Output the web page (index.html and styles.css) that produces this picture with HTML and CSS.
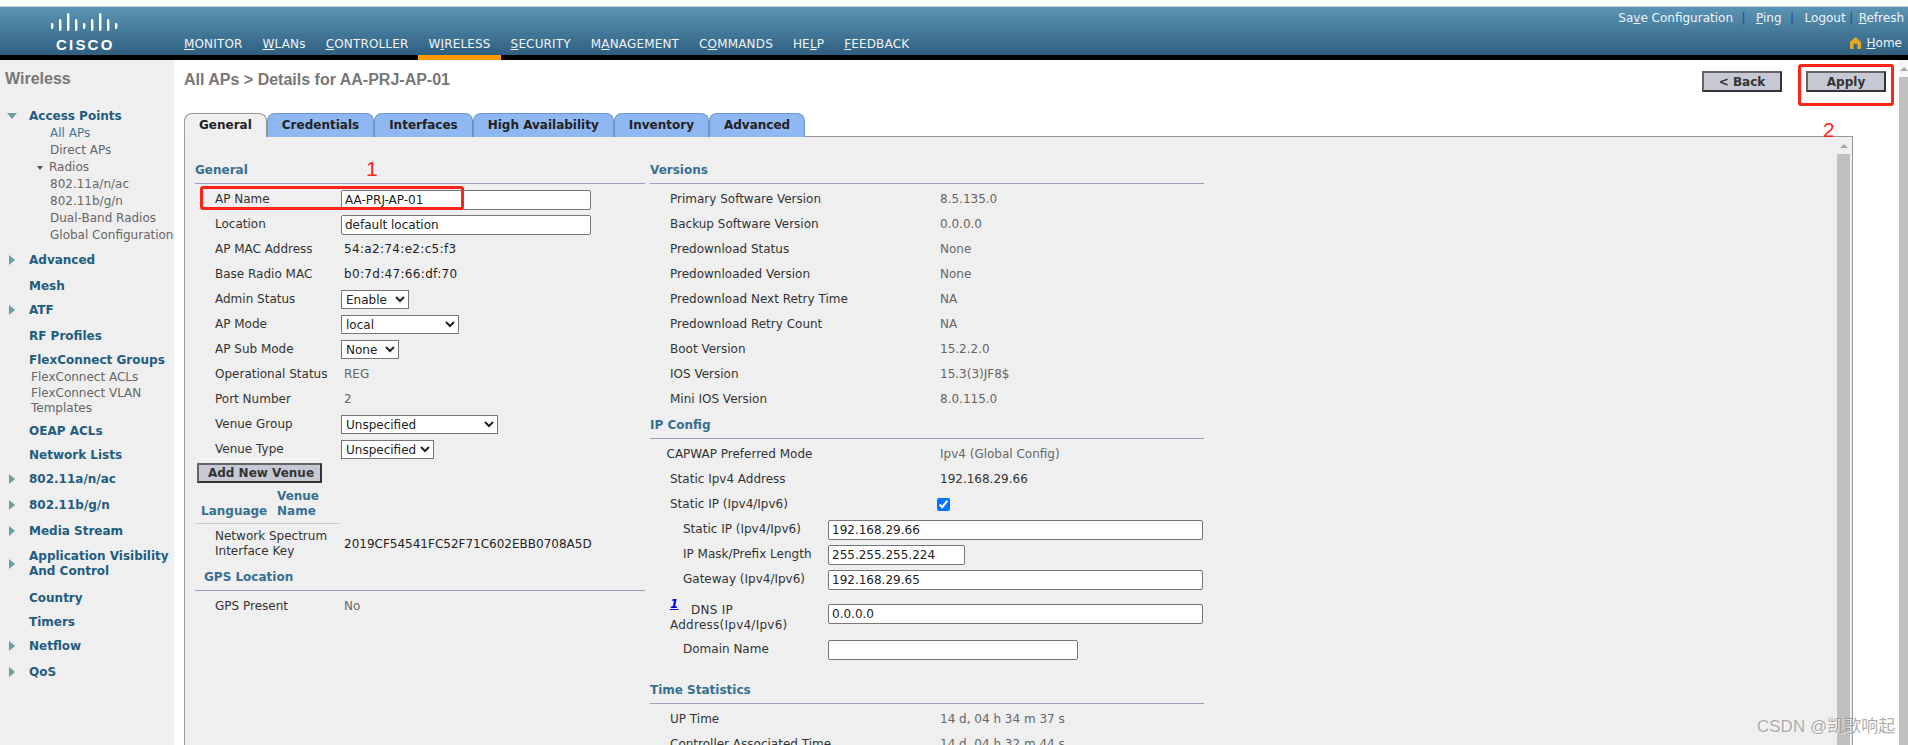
FILE: index.html
```html
<!DOCTYPE html>
<html lang="en">
<head>
  <meta charset="UTF-8" />
  <title>All APs > Details</title>
  <link rel="stylesheet" href="styles.css">
</head>
<body>
  <div class="topbar">
    <div class="logo">
      <svg class="bars" width="70" height="19" viewBox="0 0 70 19">
        <rect x="0" y="10" width="2.4" height="6" rx="1.2"/>
        <rect x="8" y="6" width="2.4" height="12" rx="1.2"/>
        <rect x="16" y="0" width="2.4" height="18" rx="1.2"/>
        <rect x="24" y="6" width="2.4" height="12" rx="1.2"/>
        <rect x="32" y="10" width="2.4" height="6" rx="1.2"/>
        <rect x="40" y="6" width="2.4" height="12" rx="1.2"/>
        <rect x="48" y="0" width="2.4" height="18" rx="1.2"/>
        <rect x="56" y="6" width="2.4" height="12" rx="1.2"/>
        <rect x="64" y="10" width="2.4" height="6" rx="1.2"/>
      </svg>
      <div class="logo-text">CISCO</div>
    </div>
    <nav class="mainnav">
      <a href="#"><u>M</u>ONITOR</a>
      <a href="#"><u>W</u>LANs</a>
      <a href="#"><u>C</u>ONTROLLER</a>
      <a href="#" class="active">W<u>I</u>RELESS</a>
      <a href="#"><u>S</u>ECURITY</a>
      <a href="#">M<u>A</u>NAGEMENT</a>
      <a href="#">C<u>O</u>MMANDS</a>
      <a href="#">HE<u>L</u>P</a>
      <a href="#"><u>F</u>EEDBACK</a>
    </nav>
    <div class="toplinks">
      <div class="toplinks-row">
        <a href="#" class="save">Sa<u>v</u>e Configuration</a><i class="sep sep-a">|</i>
        <a href="#"><u>P</u>ing</a><i class="sep sep-a">|</i>
        <a href="#">Lo<u>g</u>out</a><i class="sep sep-b">|</i>
        <a href="#"><u>R</u>efresh</a>
      </div>
      <div class="home-row">
        <svg width="11" height="12" viewBox="0 0 11 12"><path d="M5.5 0 L11 5 V12 H7.5 V7.5 Q5.5 5.5 3.5 7.5 V12 H0 V5 Z" fill="#e8a71c"/></svg>
        <a href="#"><u>H</u>ome</a>
      </div>
    </div>
  </div>

  <div class="page">
    <aside class="sidebar">
      <div class="side-title">Wireless</div>
      <a class="side-item open" href="#"><span class="arrow-down"></span>Access Points</a>
      <div class="sublist">
        <a href="#" class="current">All APs</a>
        <a href="#">Direct APs</a>
        <a href="#" class="radios"><span class="arrow-small"></span>Radios</a>
        <a href="#">802.11a/n/ac</a>
        <a href="#">802.11b/g/n</a>
        <a href="#">Dual-Band Radios</a>
        <a href="#">Global Configuration</a>
      </div>
      <a class="side-item has-arrow" href="#"><span class="arrow-right"></span>Advanced</a>
      <a class="side-item" href="#">Mesh</a>
      <a class="side-item has-arrow" href="#"><span class="arrow-right"></span>ATF</a>
      <a class="side-item" href="#">RF Profiles</a>
      <a class="side-item" href="#">FlexConnect Groups</a>
      <div class="sublist flex-list">
        <a href="#">FlexConnect ACLs</a>
        <a href="#">FlexConnect VLAN</a>
        <a href="#">Templates</a>
      </div>
      <a class="side-item" href="#">OEAP ACLs</a>
      <a class="side-item" href="#">Network Lists</a>
      <a class="side-item has-arrow" href="#"><span class="arrow-right"></span>802.11a/n/ac</a>
      <a class="side-item has-arrow" href="#"><span class="arrow-right"></span>802.11b/g/n</a>
      <a class="side-item has-arrow" href="#"><span class="arrow-right"></span>Media Stream</a>
      <a class="side-item has-arrow two-line" href="#"><span class="arrow-right"></span><span>Application Visibility<br>And Control</span></a>
      <a class="side-item" href="#">Country</a>
      <a class="side-item" href="#">Timers</a>
      <a class="side-item has-arrow" href="#"><span class="arrow-right"></span>Netflow</a>
      <a class="side-item has-arrow" href="#"><span class="arrow-right"></span>QoS</a>
    </aside>

    <main class="content">
      <div class="content-head">
        <h1>All APs &gt; Details for AA-PRJ-AP-01</h1>
        <div class="actions">
          <button class="btn">&lt; Back</button>
          <button class="btn">Apply</button>
        </div>
      </div>

      <div class="tabs">
        <a href="#" class="tab tab-on">General</a>
        <a href="#" class="tab">Credentials</a>
        <a href="#" class="tab">Interfaces</a>
        <a href="#" class="tab">High Availability</a>
        <a href="#" class="tab">Inventory</a>
        <a href="#" class="tab">Advanced</a>
      </div>

      <div class="panel">
        <div class="panel-body">
          <section class="col col-left">
            <h2>General</h2>
            <div class="rows">
              <div class="row"><label>AP Name</label><input type="text" class="w-249" value="AA-PRJ-AP-01"></div>
              <div class="row"><label>Location</label><input type="text" class="w-249" value="default location"></div>
              <div class="row"><label>AP MAC Address</label><span class="val mac">54:a2:74:e2:c5:f3</span></div>
              <div class="row"><label>Base Radio MAC</label><span class="val mac">b0:7d:47:66:df:70</span></div>
              <div class="row"><label>Admin Status</label><select class="s-67"><option>Enable</option></select></div>
              <div class="row"><label>AP Mode</label><select class="s-117"><option>local</option></select></div>
              <div class="row"><label>AP Sub Mode</label><select class="s-56"><option>None</option></select></div>
              <div class="row"><label>Operational Status</label><span class="val dim">REG</span></div>
              <div class="row"><label>Port Number</label><span class="val dim">2</span></div>
              <div class="row"><label>Venue Group</label><select class="s-156"><option>Unspecified</option></select></div>
              <div class="row"><label>Venue Type</label><select class="s-92"><option>Unspecified</option></select></div>
            </div>
            <button class="btn btn-venue">Add New Venue</button>
            <div class="venue-head"><span class="vh-lang">Language</span><span class="vh-name">Venue<br>Name</span></div>
            <div class="row row-key"><label>Network Spectrum<br>Interface Key</label><span class="val">2019CF54541FC52F71C602EBB0708A5D</span></div>
            <h2 class="gps">GPS Location</h2>
            <div class="rows">
              <div class="row"><label>GPS Present</label><span class="val dim">No</span></div>
            </div>
          </section>

          <section class="col col-right">
            <h2>Versions</h2>
            <div class="rows">
              <div class="row"><label>Primary Software Version</label><span class="dim">8.5.135.0</span></div>
              <div class="row"><label>Backup Software Version</label><span class="dim">0.0.0.0</span></div>
              <div class="row"><label>Predownload Status</label><span class="dim">None</span></div>
              <div class="row"><label>Predownloaded Version</label><span class="dim">None</span></div>
              <div class="row"><label>Predownload Next Retry Time</label><span class="dim">NA</span></div>
              <div class="row"><label>Predownload Retry Count</label><span class="dim">NA</span></div>
              <div class="row"><label>Boot Version</label><span class="dim">15.2.2.0</span></div>
              <div class="row"><label>IOS Version</label><span class="dim">15.3(3)JF8$</span></div>
              <div class="row"><label>Mini IOS Version</label><span class="dim">8.0.115.0</span></div>
            </div>
            <h2>IP Config</h2>
            <div class="rows">
              <div class="row row-capwap"><label>CAPWAP Preferred Mode</label><span class="dim">Ipv4 (Global Config)</span></div>
              <div class="row"><label>Static Ipv4 Address</label><span>192.168.29.66</span></div>
              <div class="row"><label>Static IP (Ipv4/Ipv6)</label><input type="checkbox" class="check" checked></div>
              <div class="row row-sub"><label>Static IP (Ipv4/Ipv6)</label><input type="text" class="w-375" value="192.168.29.66"></div>
              <div class="row row-sub"><label>IP Mask/Prefix Length</label><input type="text" class="w-137" value="255.255.255.224"></div>
              <div class="row row-sub"><label>Gateway (Ipv4/Ipv6)</label><input type="text" class="w-375" value="192.168.29.65"></div>
              <div class="row row-dns"><label><a href="#" class="note">1</a>DNS IP<br>Address(Ipv4/Ipv6)</label><input type="text" class="w-375" value="0.0.0.0"></div>
              <div class="row row-sub"><label>Domain Name</label><input type="text" class="w-249" value=""></div>
            </div>
            <h2 class="time-head">Time Statistics</h2>
            <div class="rows">
              <div class="row"><label>UP Time</label><span class="dim">14 d, 04 h 34 m 37 s</span></div>
              <div class="row"><label>Controller Associated Time</label><span class="dim">14 d, 04 h 32 m 44 s</span></div>
            </div>
          </section>
        </div>
        <div class="scroll scroll-inner"><span class="scroll-up"></span><span class="scroll-thumb"></span></div>
      </div>
    </main>

    <div class="scroll scroll-outer"><span class="scroll-up"></span><span class="scroll-thumb"></span></div>
  </div>

  <!-- red marks drawn over the screenshot -->
  <div class="mark mark-name"></div>
  <div class="mark mark-apply"></div>
  <div class="mark-num num-1">1</div>
  <div class="mark-num num-2">2</div>
  <div class="watermark">CSDN @凯歌响起</div>
</body>
</html>
```

FILE: styles.css
```css
html, body {
  margin: 0;
  height: 745px;
  overflow: hidden;
}
body {
  position: relative;
  font-family: "DejaVu Sans", Verdana, sans-serif;
  font-size: 12px;
  color: #333;
  background: #fff;
}
a {
  color: inherit;
  text-decoration: none;
}

/* top bar */
.topbar {
  display: flex;
  box-sizing: border-box;
  height: 54px;
  margin-top: 6px;
  border-top: 1px solid #ccc;
  border-bottom: 5px solid #000;
  background: linear-gradient(#5b94b5, #2f5f80);
  color: #f0f4f8;
}
.logo {
  width: 174px;
  padding: 6px 0 0 51px;
  box-sizing: border-box;
  color: #fff;
}
.bars {
  display: block;
  fill: #fff;
}
.logo-text {
  font-family: "Liberation Sans", Arial, sans-serif;
  font-weight: bold;
  font-size: 15px;
  line-height: 15px;
  letter-spacing: 2.2px;
  margin: 5px 0 0 5px;
}
.mainnav {
  display: flex;
  align-self: flex-end;
  letter-spacing: .16px;
}
.mainnav a {
  padding: 0 10px 3px;
  line-height: 16px;
  margin-bottom: -5px;
  border-bottom: 5px solid transparent;
}
.mainnav a.active {
  border-bottom-color: #f90;
}
.toplinks {
  margin-left: auto;
  padding: 3px 4px 0 0;
}
.toplinks-row {
  display: flex;
  line-height: 16px;
}
.sep {
  font-style: normal;
  color: #2d4a80;
  width: 5px;
  text-align: center;
}
.sep-a {
  margin: 0 10px 0 8px;
}
.sep-b {
  margin: 0 5px 0 3px;
}
.home-row {
  display: flex;
  align-items: center;
  justify-content: flex-end;
  gap: 6px;
  margin: 9px 2px 0 0;
  line-height: 16px;
}

/* page */
.page {
  display: flex;
  height: 685px;
}
.sidebar {
  flex: none;
  width: 174px;
  background: #efefef;
  overflow: hidden;
}
.side-title {
  font-family: "Liberation Sans", Arial, sans-serif;
  font-size: 16px;
  font-weight: bold;
  color: #777;
  line-height: 36px;
  padding: 1px 0 0 5px;
  margin-bottom: 10px;
}
.side-item {
  display: flex;
  align-items: center;
  height: 24px;
  padding-left: 29px;
  font-weight: bold;
  color: #1f5d80;
}
.side-item.open {
  height: 18px;
  padding-left: 7px;
}
.side-item.has-arrow {
  padding-left: 9px;
  margin-bottom: 2px;
}
.side-item.two-line {
  height: auto;
  padding-top: 4.5px;
  padding-bottom: 4.5px;
  line-height: 15px;
}
.arrow-right {
  width: 0;
  height: 0;
  margin-right: 14px;
  border-left: 6px solid #6b9f9f;
  border-top: 5px solid transparent;
  border-bottom: 5px solid transparent;
}
.arrow-down {
  width: 0;
  height: 0;
  margin-right: 12px;
  border-top: 6px solid #6b9f9f;
  border-left: 5px solid transparent;
  border-right: 5px solid transparent;
}
.arrow-small {
  width: 0;
  height: 0;
  margin-right: 6px;
  border-top: 4px solid #555;
  border-left: 3.5px solid transparent;
  border-right: 3.5px solid transparent;
}
.sublist {
  margin-bottom: 4px;
  padding-left: 50px;
  color: #666;
  line-height: 17px;
}
.sublist a {
  display: block;
  white-space: nowrap;
}
.sublist .current {
  color: #3f7a9c;
}
.sublist .radios {
  display: flex;
  align-items: center;
  margin-left: -13px;
}
.flex-list {
  margin: -2px 0 2px;
  padding-left: 31px;
  line-height: 15.5px;
}

/* content */
.content {
  flex: 1;
  min-width: 0;
  padding-left: 10px;
  padding-right: 46px;
  display: flex;
  flex-direction: column;
}
.content-head {
  display: flex;
  justify-content: space-between;
  height: 53px;
  flex: none;
}
h1 {
  margin: 0;
  font-family: "Liberation Sans", Arial, sans-serif;
  font-size: 16px;
  font-weight: bold;
  color: #777;
  line-height: 40px;
}
.actions {
  display: flex;
  gap: 24px;
  margin: 11px -33px 0 0;
  align-items: flex-start;
}
.btn {
  width: 80px;
  height: 21px;
  padding: 0;
  font-family: inherit;
  font-size: 12px;
  font-weight: bold;
  color: #333;
  background: #c6c9d4;
  border: 2px solid;
  border-color: #666 #333 #333 #666;
}
.btn-venue {
  display: block;
  width: 125px;
  height: 20px;
  margin: 1px 0 0 2px;
  padding-left: 3px;
}

.tabs {
  display: flex;
  flex: none;
  height: 24px;
  position: relative;
  z-index: 1;
}
.tab {
  box-sizing: border-box;
  height: 24px;
  padding: 0 14px;
  line-height: 22px;
  font-weight: bold;
  color: #222;
  background: #8fb8f2;
  border: 1px solid #6b95cc;
  border-bottom: 0;
  border-radius: 8px 8px 0 0;
}
.tab-on {
  background: #f0f0f0;
  border-color: #999;
}
.panel {
  flex: 1;
  display: flex;
  min-height: 0;
  margin-top: -1px;
  background: #efefef;
  border: 1px solid #999;
  border-bottom: 0;
}
.panel-body {
  flex: 1;
  display: flex;
  gap: 5px;
  padding: 20px 0 0 10px;
  overflow: hidden;
  line-height: 15px;
}
.col-left {
  flex: none;
  width: 450px;
}
.col-right {
  flex: none;
  width: 554px;
}
h2 {
  box-sizing: border-box;
  height: 27px;
  margin: 0;
  font-size: 12px;
  font-weight: bold;
  line-height: 26px;
  color: #37708f;
  border-bottom: 1px solid #9a9fc0;
}
.gps {
  margin-top: 5px;
  padding-left: 9px;
}
.time-head {
  margin-top: 15px;
}
.rows {
  margin-top: 3px;
  margin-bottom: 0;
}
.row {
  display: flex;
  align-items: center;
  height: 25px;
  padding-left: 20px;
}
.row label {
  flex: none;
  width: 126px;
  color: #333;
}
.col-right .row label {
  width: 270px;
}
.val {
  padding-left: 3px;
  color: #222;
}
.mac {
  letter-spacing: .33px;
}
.dim {
  color: #666;
}
.col-right .row-capwap {
  padding-left: 16.5px;
}
.col-right .row-capwap label {
  width: 273.5px;
}
.col-right .row-sub {
  padding-left: 33px;
}
.col-right .row-sub label {
  width: 145px;
}
.col-right .row-dns {
  height: 44px;
  margin-bottom: 1px;
}
.col-right .row-dns label {
  width: 158px;
  padding-top: 3px;
  white-space: nowrap;
  letter-spacing: .25px;
}
.note {
  display: inline-block;
  width: 8px;
  margin-right: 13px;
  color: #00e;
  font-weight: bold;
  font-style: italic;
  text-decoration: underline;
  vertical-align: 6px;
  line-height: 12px;
}
input[type="text"] {
  box-sizing: border-box;
  height: 20px;
  padding: 0 3px;
  font-family: inherit;
  font-size: 12px;
  color: #222;
  background: #fff;
  border: 1px solid #767676;
  border-radius: 2px;
}
select {
  box-sizing: border-box;
  height: 19px;
  font-family: inherit;
  font-size: 12px;
  color: #222;
  background: #fff;
}
.check {
  width: 13px;
  height: 13px;
  margin: 0 0 0 -3px;
  accent-color: #0075ff;
}
.w-249 { width: 250px; }
.w-375 { width: 375px; }
.w-137 { width: 137px; }
.s-67 { width: 68px; }
.s-117 { width: 118px; }
.s-56 { width: 58px; }
.s-156 { width: 157px; }
.s-92 { width: 93px; }

.venue-head {
  display: flex;
  align-items: flex-end;
  width: 144px;
  padding: 6px 0 4px;
  font-weight: bold;
  color: #37708f;
  border-bottom: 1px solid #ccc;
}
.vh-lang {
  width: 76px;
  padding-left: 6px;
  flex: none;
}
.row-key {
  height: 30px;
  margin-top: 5px;
}
.row-key .val {
  white-space: nowrap;
}

/* fake scrollbars */
.scroll {
  display: flex;
  flex-direction: column;
  align-items: center;
  flex: none;
}
.scroll-thumb {
  flex: 1;
  align-self: stretch;
  background: #bfbfbf;
}
.scroll-up {
  width: 0;
  height: 0;
  border-bottom: 4px solid #a8a8a8;
  border-left: 4px solid transparent;
  border-right: 4px solid transparent;
}
.scroll-inner {
  width: 13px;
  margin-right: 2px;
}
.scroll-inner .scroll-up {
  margin: 7px 0 6px;
}
.scroll-outer {
  width: 9px;
  background: #f5f5f5;
}
.scroll-outer .scroll-up {
  margin: 7px 0 6px;
}

/* annotations */
.mark {
  position: absolute;
  box-sizing: border-box;
  border: 3px solid #ff2418;
  border-radius: 3px;
}
.mark-name {
  left: 200px;
  top: 186px;
  width: 264px;
  height: 24px;
}
.mark-apply {
  left: 1798px;
  top: 64px;
  width: 96px;
  height: 42px;
}
.mark-num {
  position: absolute;
  font-family: "Liberation Sans", Arial, sans-serif;
  font-size: 21px;
  line-height: 24px;
  color: #ff2418;
}
.num-1 {
  left: 366px;
  top: 157px;
}
.num-2 {
  left: 1823px;
  top: 118px;
}
.watermark {
  position: absolute;
  left: 1757px;
  top: 716px;
  font-family: "Liberation Sans", "Noto Sans CJK SC", sans-serif;
  font-size: 17px;
  line-height: 22px;
  white-space: nowrap;
  color: rgba(120, 120, 120, 0.6);
  text-shadow: 1px 1px 1px rgba(255, 255, 255, 0.6);
}
```
